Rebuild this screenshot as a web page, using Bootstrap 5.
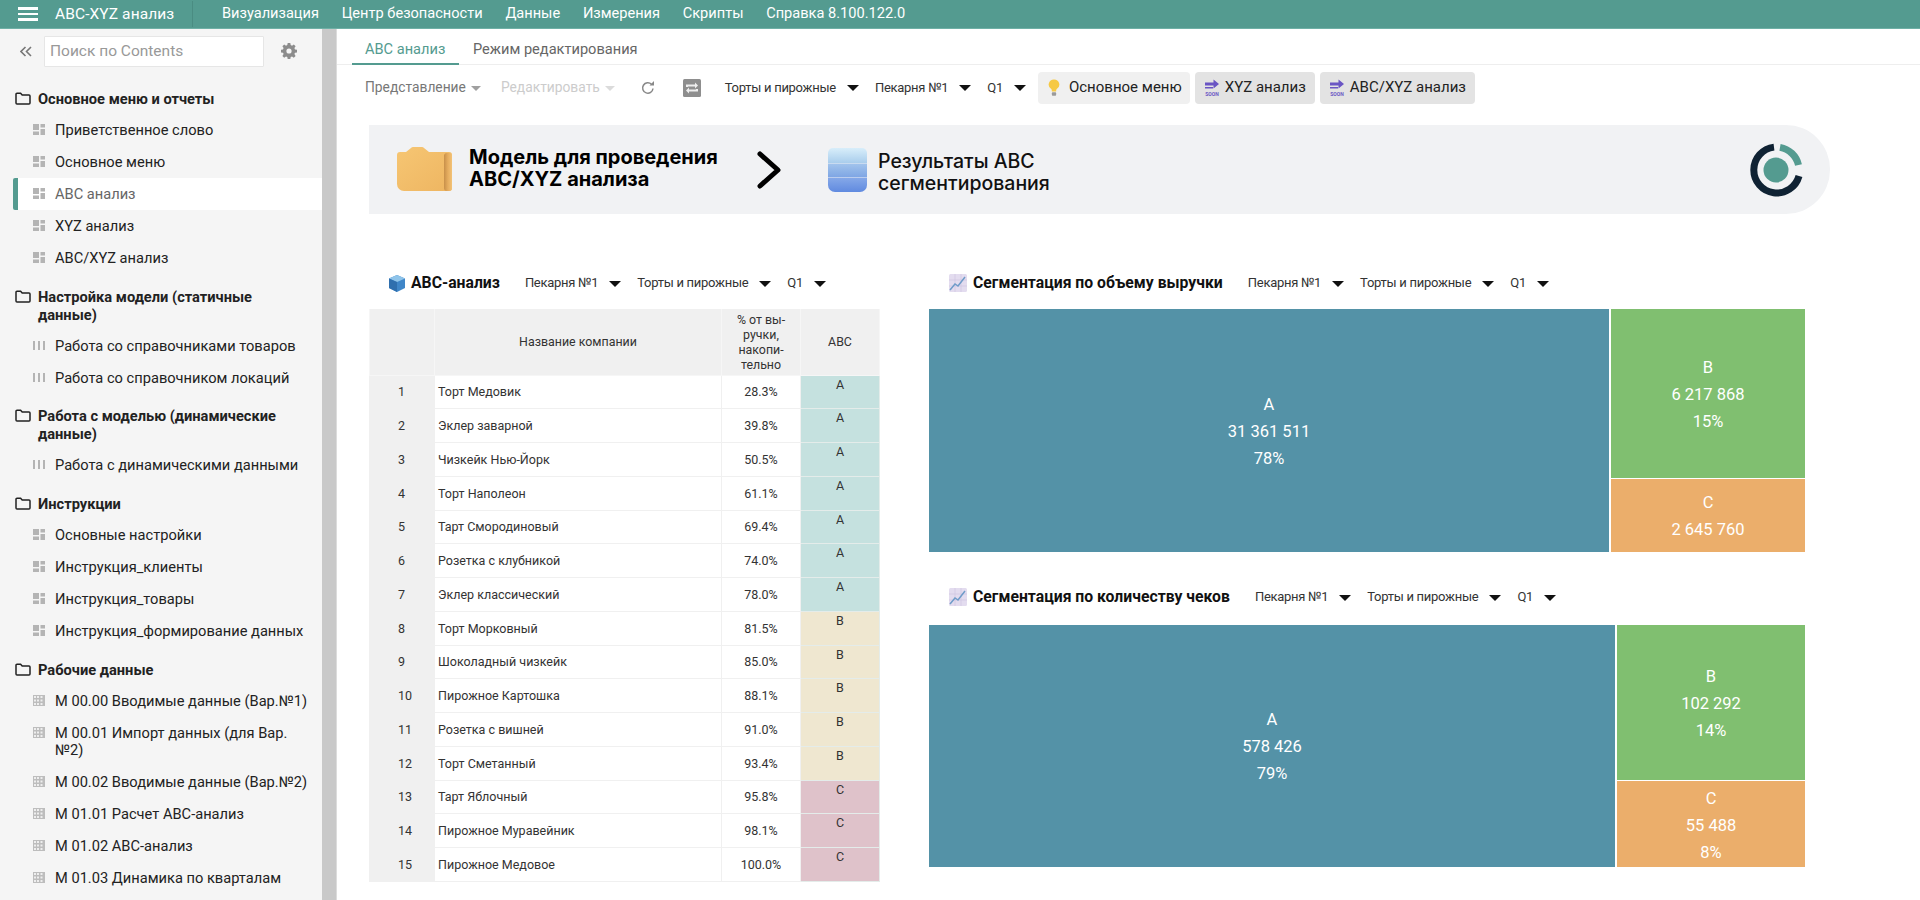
<!DOCTYPE html>
<html lang="ru">
<head>
  <meta charset="UTF-8" />
  <meta name="viewport" content="width=device-width, initial-scale=1" />
  <title>ABC-XYZ анализ</title>
  <link href="https://cdn.jsdelivr.net/npm/bootstrap@5.3.0/dist/css/bootstrap.min.css" rel="stylesheet" />
  <style>
    html, body { height: 100%; overflow: hidden; }
    body { font-family: Roboto, "Liberation Sans", sans-serif; color: #222; background: #fff; }

    /* top bar */
    .top-bar { height: 29px; background: #549b90; border-bottom: 1px solid #6fb0a6; color: #fff; font-size: 14.6px; padding: 0; flex-wrap: nowrap; justify-content: flex-start; }
    .burger { width: 20px; margin-left: 18px; display: flex; flex-direction: column; gap: 3px; }
    .burger span { height: 2.5px; background: #fff; display: block; }
    .app-title { margin-left: 17px; width: 138px; font-size: 15.5px; letter-spacing: .1px; border-right: 1px solid #4a8c82; line-height: 26px; }
    .top-menu { margin-left: 29px; gap: 22.7px; }
    .top-menu span { white-space: nowrap; }

    .app-body { height: 871px; }

    /* sidebar */
    .side-pane { width: 322px; flex: none; background: #f5f5f5; overflow: hidden; font-size: 14.65px; line-height: 17px; color: #222; }
    .side-gutter { width: 15px; flex: none; background: #c9c9c9; border-right: 1px solid #dcdcdc; }
    .search-row { height: 42px; padding-top: 2px; }
    .collapse-mark { width: 44px; padding-left: 20px; color: #777; }
    .search-box { width: 220px; height: 31px; border: 1px solid #e6e6e6; background: #fff; border-radius: 1px; color: #999; padding: 0 5px; font-size: 15.5px; line-height: 29px; }
    .gear-mark { margin-left: 17px; }
    .side-group { margin-top: 14px; padding: 0 16px 6px 38px; font-weight: 700; position: relative; line-height: 18px; }
    .search-row + .side-group { margin-top: 19px; }
    .side-group.is-tight { margin-top: 13px; }
    .side-group svg { position: absolute; left: 15px; top: 2px; }
    .side-item { padding: 7.5px 10px 7.5px 37px; position: relative; margin-left: 18px; }
    .side-item svg { position: absolute; left: 15px; top: 10px; }
    .side-item.is-active { background: #fff; color: #666; }
    .side-item.is-active::before { content: ""; position: absolute; left: -5px; top: 0; bottom: 0; width: 5px; background: #549b90; border-radius: 2px 0 0 2px; }

    /* tabs and toolbar */
    .main-pane { flex: 1; min-width: 0; overflow: hidden; }
    .tab-line { height: 36px; padding-left: 15px; border-bottom: 1px solid #eee; font-size: 14.6px; color: #666; }
    .tab-cell { padding: 10px 13px 0 13px; height: 36px; margin-right: 9px; }
    .tab-cell.is-on { color: #549b90; border-bottom: 2px solid #549b90; width: 107px; margin-right: 1px; white-space: nowrap; }
    .tool-line { height: 38px; padding: 7px 0 0 28px; white-space: nowrap; }
    .tool-menu { font-size: 13.8px; color: #777; margin-right: 20px; }
    .tool-menu.is-off { color: #ccc; margin-right: 25px; }
    .tool-menu::after, .pick::after { content: ""; display: inline-block; vertical-align: middle; border-style: solid; border-color: currentColor transparent transparent; }
    .tool-menu::after { border-width: 5px 5px 0; margin-left: 5px; opacity: .7; }
    .pick { font-size: 13px; color: #333; letter-spacing: -.28px; }
    .pick::after { border-width: 6px 6px 0; margin-left: 11px; color: #111; }
    .tool-line .pick { margin-right: 16px; }
    .refresh-mark { margin-right: 27px; }
    .swap-mark { margin-right: 24px; }
    .tool-btn { height: 32px; padding: 0 9px; font-size: 15px; color: #222; border: 0; border-radius: 4px; background: #e3e3e3; margin-right: 5px; display: flex; align-items: center; gap: 5px; }
    .tool-btn.is-soft { background: #f0f0f0; gap: 9px; padding: 0 8px 0 10px; margin-left: -4px; }

    /* banner */
    .hero { width: 1461px; height: 89px; margin: 22px 0 0 32px; background: #f1f2f4; border-radius: 0 44px 44px 0; padding-left: 28px; }
    .hero-strong { font-family: Inter, Roboto, sans-serif; font-weight: 700; font-size: 20px; line-height: 22px; color: #000; margin-left: 17px; width: 288px; padding-bottom: 4px; }
    .hero-plain { font-family: Inter, Roboto, sans-serif; font-weight: 500; font-size: 19.5px; line-height: 22px; color: #111; margin-left: 11px; padding-top: 4px; }
    .hero-next { margin-right: 47px; }
    .hero-logo { margin-left: auto; margin-right: 27px; }

    /* dashboard */
    .dash { margin: 43px 0 0 32px; gap: 50px; }
    .dash-left { width: 510px; flex: none; }
    .dash-right { width: 876px; flex: none; }
    .sec-head { height: 52px; white-space: nowrap; }
    .sec-head.is-second { height: 56px; margin-top: 17px; }
    .sec-title { font-weight: 700; font-size: 15.75px; color: #111; margin-left: 6px; }
    .cube-mark { margin-left: 20px; }
    .trend-mark { margin-left: 20px; }
    .sec-head .pick { margin-left: 24px; margin-right: -8px; }
    .sec-head .sec-title + .pick { margin-left: 25px; }

    /* abc table */
    .abc-grid { width: 510px; table-layout: fixed; border-collapse: collapse; font-size: 12.5px; line-height: 14px; color: #333; }
    .abc-grid th { background: #f0f0f0; font-weight: 400; font-size: 12.4px; text-align: center; height: 66px; padding: 0; border: 1px solid #f6f6f6; border-top: 0; line-height: 15px; vertical-align: middle; }
    .abc-grid td { height: 33.75px; padding: 1px 0 0; border: 1px solid #f0f0f0; vertical-align: middle; }
    .abc-grid td:nth-child(1) { background: #f0f0f0; padding-left: 28px; }
    .abc-grid td:nth-child(2) { padding-left: 3px; }
    .abc-grid td:nth-child(3) { text-align: center; }
    .abc-grid td:nth-child(4) { text-align: center; vertical-align: top; padding-top: 2px; font-size: 12.5px; border-color: #e4ecea; }
    .abc-grid td.tone-a { background: #c5e1df; }
    .abc-grid td.tone-b { background: #efe7d0; }
    .abc-grid td.tone-c { background: #dfc2ca; }
    .col-idx { width: 65px; }
    .col-name { width: 287px; }
    .col-pct { width: 79px; }
    .col-seg { width: 79px; }

    /* treemaps */
    .tree-map { color: #fff; font-size: 16.5px; line-height: 27px; text-align: center; overflow: hidden; }
    .tree-first { height: 243px; }
    .tree-second { height: 242px; }
    .tree-block { display: flex; flex-direction: column; align-items: center; justify-content: center; overflow: hidden; padding-top: 2px; }
    .tree-first .seg-c, .tree-second .seg-a { padding-top: 0; }
    .seg-a { background: #5492a7; }
    .seg-b { background: #80bf70; }
    .seg-c { background: #ebae6b; }
    .tree-side { display: flex; flex-direction: column; gap: 1px; margin-left: 2px; flex: 1; }
  </style>
</head>
<body>
<svg width="0" height="0" class="position-absolute">
  <defs>
    <linearGradient id="folder-fill" x1="0" y1="0" x2="1" y2="1"><stop offset="0" stop-color="#f6c673"/><stop offset="1" stop-color="#eeb561"/></linearGradient>
    <linearGradient id="folder-lip" x1="0" y1="0" x2="1" y2="0"><stop offset="0" stop-color="#c8904a"/><stop offset=".5" stop-color="#e6ad5f"/><stop offset="1" stop-color="#f3c377"/></linearGradient>
    <linearGradient id="db-top" x1="0" y1="0" x2="0" y2="1"><stop offset="0" stop-color="#d8eefa"/><stop offset="1" stop-color="#a9cdec"/></linearGradient>
    <linearGradient id="db-mid" x1="0" y1="0" x2="0" y2="1"><stop offset="0" stop-color="#a2c4ec"/><stop offset="1" stop-color="#7fa6e4"/></linearGradient>
    <linearGradient id="db-low" x1="0" y1="0" x2="0" y2="1"><stop offset="0" stop-color="#86a9e8"/><stop offset="1" stop-color="#608ae0"/></linearGradient>
  </defs>
  <symbol id="ic-folder" viewBox="0 0 16 13"><path d="M1 3V11a1 1 0 0 0 1 1H14a1 1 0 0 0 1-1V4a1 1 0 0 0-1-1H7.2L5.6 1.2H2A1 1 0 0 0 1 2.200Z" fill="none" stroke="#222" stroke-width="1.500"/></symbol>
  <symbol id="ic-dash" viewBox="0 0 12 11"><path d="M0 0h6v6H0zM0 7.500h6V11H0zM7.500 0H12v3.500H7.500zM7.500 5H12v6H7.500z" fill="#b4b4b4"/></symbol>
  <symbol id="ic-cols" viewBox="0 0 12 11"><path d="M0 1h2v9H0zM5 1h2v9H5zM10 1h2v9h-2z" fill="#b4b4b4"/></symbol>
  <symbol id="ic-table" viewBox="0 0 12 11"><path d="M0 0h12v11H0z" fill="#bdbdbd"/><path d="M1 1h2v2H1zM4 1h2v2H4zM7.500 1h2v2h-2zM1 4.500h2v2H1zM4 4.500h2v2H4zM7.500 4.500h2v2h-2zM1 8h2v2H1zM4 8h2v2H4zM7.500 8h2v2h-2z" fill="#eee"/></symbol>
  <symbol id="ic-arrow" viewBox="0 0 16 12"><path d="M1 3.500h8.500V.5L15 5l-5.500 4.500V6.500H1zM1 8h8v1.500H1z" fill="#6a55c4"/></symbol>
  <symbol id="ic-trend" viewBox="0 0 18 18"><rect width="18" height="18" rx="1.500" fill="#e3dcef"/><path d="M6 0v18M12 0v18M0 6h18M0 12h18" stroke="#cfc5e2" stroke-width=".7"/><path d="M1 16l5-6 3 2 7-9" fill="none" stroke="#6f9cc9" stroke-width="1.500"/></symbol>
</svg>

<nav class="navbar top-bar">
  <div class="burger"><span></span><span></span><span></span></div>
  <div class="app-title">ABC-XYZ анализ</div>
  <div class="d-flex top-menu">
    <span>Визуализация</span><span>Центр безопасности</span><span>Данные</span><span>Измерения</span><span>Скрипты</span><span>Справка 8.100.122.0</span>
  </div>
</nav>

<div class="d-flex app-body">
  <aside class="side-pane">
    <div class="d-flex align-items-center search-row">
      <div class="collapse-mark">
        <svg width="12" height="11" viewBox="0 0 12 11"><path d="M5.500 1L1 5.500 5.500 10M11 1L6.500 5.500 11 10" fill="none" stroke="#777" stroke-width="1.600"/></svg>
      </div>
      <div class="search-box">Поиск по Contents</div>
      <svg class="gear-mark" width="16" height="16" viewBox="0 0 16 16"><path fill="#8c8c8c" fill-rule="evenodd" d="M6.700 0h2.600l.4 2.100 1.300.6 1.800-1.200 1.800 1.800-1.200 1.800.6 1.300 2 .4v2.600l-2 .4-.6 1.300 1.200 1.800-1.800 1.800-1.800-1.200-1.300.6-.4 1.900H6.700l-.4-1.900-1.300-.6-1.800 1.200-1.800-1.800 1.200-1.800-.6-1.300-2-.4V6.800l2-.4.6-1.300-1.200-1.800 1.800-1.800 1.800 1.200 1.300-.6zM8 5.400a2.600 2.600 0 1 0 0 5.200 2.600 2.600 0 0 0 0-5.200z"/></svg>
    </div>

    <div class="side-group"><svg width="16" height="13"><use href="#ic-folder"/></svg>Основное меню и отчеты</div>
    <div class="side-item"><svg width="12" height="11"><use href="#ic-dash"/></svg>Приветственное слово</div>
    <div class="side-item"><svg width="12" height="11"><use href="#ic-dash"/></svg>Основное меню</div>
    <div class="side-item is-active"><svg width="12" height="11"><use href="#ic-dash"/></svg>ABC анализ</div>
    <div class="side-item"><svg width="12" height="11"><use href="#ic-dash"/></svg>XYZ анализ</div>
    <div class="side-item"><svg width="12" height="11"><use href="#ic-dash"/></svg>ABC/XYZ анализ</div>

    <div class="side-group"><svg width="16" height="13"><use href="#ic-folder"/></svg>Настройка модели (статичные данные)</div>
    <div class="side-item"><svg width="12" height="11"><use href="#ic-cols"/></svg>Работа со справочниками товаров</div>
    <div class="side-item"><svg width="12" height="11"><use href="#ic-cols"/></svg>Работа со справочником локаций</div>

    <div class="side-group is-tight"><svg width="16" height="13"><use href="#ic-folder"/></svg>Работа с моделью (динамические данные)</div>
    <div class="side-item"><svg width="12" height="11"><use href="#ic-cols"/></svg>Работа с динамическими данными</div>

    <div class="side-group"><svg width="16" height="13"><use href="#ic-folder"/></svg>Инструкции</div>
    <div class="side-item"><svg width="12" height="11"><use href="#ic-dash"/></svg>Основные настройки</div>
    <div class="side-item"><svg width="12" height="11"><use href="#ic-dash"/></svg>Инструкция_клиенты</div>
    <div class="side-item"><svg width="12" height="11"><use href="#ic-dash"/></svg>Инструкция_товары</div>
    <div class="side-item"><svg width="12" height="11"><use href="#ic-dash"/></svg>Инструкция_формирование данных</div>

    <div class="side-group"><svg width="16" height="13"><use href="#ic-folder"/></svg>Рабочие данные</div>
    <div class="side-item"><svg width="12" height="11"><use href="#ic-table"/></svg>М 00.00 Вводимые данные (Вар.№1)</div>
    <div class="side-item"><svg width="12" height="11"><use href="#ic-table"/></svg>М 00.01 Импорт данных (для Вар. №2)</div>
    <div class="side-item"><svg width="12" height="11"><use href="#ic-table"/></svg>М 00.02 Вводимые данные (Вар.№2)</div>
    <div class="side-item"><svg width="12" height="11"><use href="#ic-table"/></svg>М 01.01 Расчет ABC-анализ</div>
    <div class="side-item"><svg width="12" height="11"><use href="#ic-table"/></svg>М 01.02 ABC-анализ</div>
    <div class="side-item"><svg width="12" height="11"><use href="#ic-table"/></svg>М 01.03 Динамика по кварталам</div>
  </aside>
  <div class="side-gutter"></div>

  <main class="main-pane">
    <div class="d-flex tab-line">
      <div class="tab-cell is-on">ABC анализ</div>
      <div class="tab-cell">Режим редактирования</div>
    </div>

    <div class="d-flex align-items-center tool-line">
      <span class="tool-menu">Представление</span>
      <span class="tool-menu is-off">Редактировать</span>
      <svg class="refresh-mark" width="16" height="16" viewBox="0 0 16 16"><path d="M13 8.500A5.200 5.200 0 1 1 11.500 4.300" fill="none" stroke="#888" stroke-width="1.500"/><path d="M9.500 5.500h4.500V1z" fill="#888"/></svg>
      <svg class="swap-mark" width="18" height="18" viewBox="0 0 18 18"><rect width="18" height="18" rx="1.500" fill="#8e8e8e"/><path d="M3 8V5.500h9V3.500l3 3-3 3v-2H5V8zM15 10v2.500H6v2l-3-3 3-3v2h7V10z" fill="#eee"/></svg>
      <span class="pick">Торты и пирожные</span>
      <span class="pick">Пекарня №1</span>
      <span class="pick">Q1</span>
      <button class="btn tool-btn is-soft" type="button">
        <svg width="12" height="18" viewBox="0 0 14 20"><path d="M7 0a6 6 0 0 1 3.500 11c-.8.700-1 1.500-1 3h-5c0-1.500-.2-2.300-1-3A6 6 0 0 1 7 0z" fill="#f6c945"/><rect x="4.500" y="15" width="5" height="4" rx="1" fill="#9a9a9a"/></svg>
        Основное меню
      </button>
      <button class="btn tool-btn" type="button">
        <svg width="16" height="18" viewBox="0 0 16 18"><use href="#ic-arrow" width="16" height="12"/><text x="8" y="17" font-size="5" font-weight="700" text-anchor="middle" fill="#6a55c4" font-family="Roboto, sans-serif">SOON</text></svg>
        XYZ анализ
      </button>
      <button class="btn tool-btn" type="button">
        <svg width="16" height="18" viewBox="0 0 16 18"><use href="#ic-arrow" width="16" height="12"/><text x="8" y="17" font-size="5" font-weight="700" text-anchor="middle" fill="#6a55c4" font-family="Roboto, sans-serif">SOON</text></svg>
        ABC/XYZ анализ
      </button>
    </div>

    <section class="d-flex align-items-center hero">
      <svg width="55" height="46" viewBox="0 0 55 46">
        <path d="M0 8a3 3 0 0 1 3-3H9L14 1a3 3 0 0 1 2-1H25a3 3 0 0 1 2 1L32 5H52a3 3 0 0 1 3 3V41a3 3 0 0 1-3 3H7a7 7 0 0 1-7-7z" fill="url(#folder-fill)"/>
        <path d="M47 8a3 3 0 0 1 3-2h2a3 3 0 0 1 3 3V41a3 3 0 0 1-3 3H50a3 3 0 0 1-3-3z" fill="url(#folder-lip)"/>
      </svg>
      <div class="hero-strong">Модель для проведения ABC/XYZ анализа</div>
      <svg class="hero-next" width="24" height="38" viewBox="0 0 24 38"><path d="M3 3L21 19 3 35" fill="none" stroke="#000" stroke-width="5" stroke-linecap="round" stroke-linejoin="round"/></svg>
      <svg width="39" height="44" viewBox="0 0 39 44">
        <path d="M0 5a5 5 0 0 1 5-5H34a5 5 0 0 1 5 5V15H0z" fill="url(#db-top)"/>
        <rect y="15.500" width="39" height="13.500" fill="url(#db-mid)"/>
        <path d="M0 29.500H39V37a7 7 0 0 1-7 7H7a7 7 0 0 1-7-7z" fill="url(#db-low)"/>
      </svg>
      <div class="hero-plain">Результаты ABC<br>сегментирования</div>
      <svg class="hero-logo" width="54" height="54" viewBox="0 0 54 54">
        <circle cx="27" cy="27" r="12.500" fill="#549b90"/>
        <path d="M25 4.100A23 23 0 1 0 50 33" fill="none" stroke="#0f2233" stroke-width="7"/>
        <path d="M31 4.400A23 23 0 0 1 49.500 22" fill="none" stroke="#549b90" stroke-width="7"/>
      </svg>
    </section>

    <div class="d-flex dash">
      <div class="dash-left">
        <div class="d-flex align-items-center sec-head">
          <svg class="cube-mark" width="16" height="17" viewBox="0 0 16 17"><path d="M8 0l8 3.500V13l-8 4-8-4V3.500z" fill="#3f86c8"/><path d="M8 0l8 3.500L8 7 0 3.500z" fill="#8fc4ea"/><path d="M8 7v10l-8-4V3.500z" fill="#2f6fae"/></svg>
          <span class="sec-title">ABC-анализ</span>
          <span class="pick">Пекарня №1</span>
          <span class="pick">Торты и пирожные</span>
          <span class="pick">Q1</span>
        </div>
        <table class="abc-grid">
          <colgroup><col class="col-idx"><col class="col-name"><col class="col-pct"><col class="col-seg"></colgroup>
          <thead>
            <tr><th></th><th>Название компании</th><th>% от вы-<br>ручки,<br>накопи-<br>тельно</th><th>ABC</th></tr>
          </thead>
          <tbody>
            <tr><td>1</td><td>Торт Медовик</td><td>28.3%</td><td class="tone-a">A</td></tr>
            <tr><td>2</td><td>Эклер заварной</td><td>39.8%</td><td class="tone-a">A</td></tr>
            <tr><td>3</td><td>Чизкейк Нью-Йорк</td><td>50.5%</td><td class="tone-a">A</td></tr>
            <tr><td>4</td><td>Торт Наполеон</td><td>61.1%</td><td class="tone-a">A</td></tr>
            <tr><td>5</td><td>Тарт Смородиновый</td><td>69.4%</td><td class="tone-a">A</td></tr>
            <tr><td>6</td><td>Розетка с клубникой</td><td>74.0%</td><td class="tone-a">A</td></tr>
            <tr><td>7</td><td>Эклер классический</td><td>78.0%</td><td class="tone-a">A</td></tr>
            <tr><td>8</td><td>Торт Морковный</td><td>81.5%</td><td class="tone-b">B</td></tr>
            <tr><td>9</td><td>Шоколадный чизкейк</td><td>85.0%</td><td class="tone-b">B</td></tr>
            <tr><td>10</td><td>Пирожное Картошка</td><td>88.1%</td><td class="tone-b">B</td></tr>
            <tr><td>11</td><td>Розетка с вишней</td><td>91.0%</td><td class="tone-b">B</td></tr>
            <tr><td>12</td><td>Торт Сметанный</td><td>93.4%</td><td class="tone-b">B</td></tr>
            <tr><td>13</td><td>Тарт Яблочный</td><td>95.8%</td><td class="tone-c">C</td></tr>
            <tr><td>14</td><td>Пирожное Муравейник</td><td>98.1%</td><td class="tone-c">C</td></tr>
            <tr><td>15</td><td>Пирожное Медовое</td><td>100.0%</td><td class="tone-c">C</td></tr>
          </tbody>
        </table>
      </div>

      <div class="dash-right">
        <div class="d-flex align-items-center sec-head">
          <svg class="trend-mark" width="18" height="18"><use href="#ic-trend"/></svg>
          <span class="sec-title">Сегментация по объему выручки</span>
          <span class="pick">Пекарня №1</span>
          <span class="pick">Торты и пирожные</span>
          <span class="pick">Q1</span>
        </div>
        <div class="d-flex tree-map tree-first">
          <div class="tree-block seg-a" style="width:680px"><div>A</div><div>31 361 511</div><div>78%</div></div>
          <div class="tree-side">
            <div class="tree-block seg-b" style="height:169px"><div>B</div><div>6 217 868</div><div>15%</div></div>
            <div class="tree-block seg-c" style="height:73px"><div>C</div><div>2 645 760</div></div>
          </div>
        </div>

        <div class="d-flex align-items-center sec-head is-second">
          <svg class="trend-mark" width="18" height="18"><use href="#ic-trend"/></svg>
          <span class="sec-title">Сегментация по количеству чеков</span>
          <span class="pick">Пекарня №1</span>
          <span class="pick">Торты и пирожные</span>
          <span class="pick">Q1</span>
        </div>
        <div class="d-flex tree-map tree-second">
          <div class="tree-block seg-a" style="width:686px"><div>A</div><div>578 426</div><div>79%</div></div>
          <div class="tree-side">
            <div class="tree-block seg-b" style="height:155px"><div>B</div><div>102 292</div><div>14%</div></div>
            <div class="tree-block seg-c" style="height:86px"><div>C</div><div>55 488</div><div>8%</div></div>
          </div>
        </div>
      </div>
    </div>
  </main>
</div>

<script src="https://cdn.jsdelivr.net/npm/bootstrap@5.3.0/dist/js/bootstrap.bundle.min.js"></script>
</body>
</html>
